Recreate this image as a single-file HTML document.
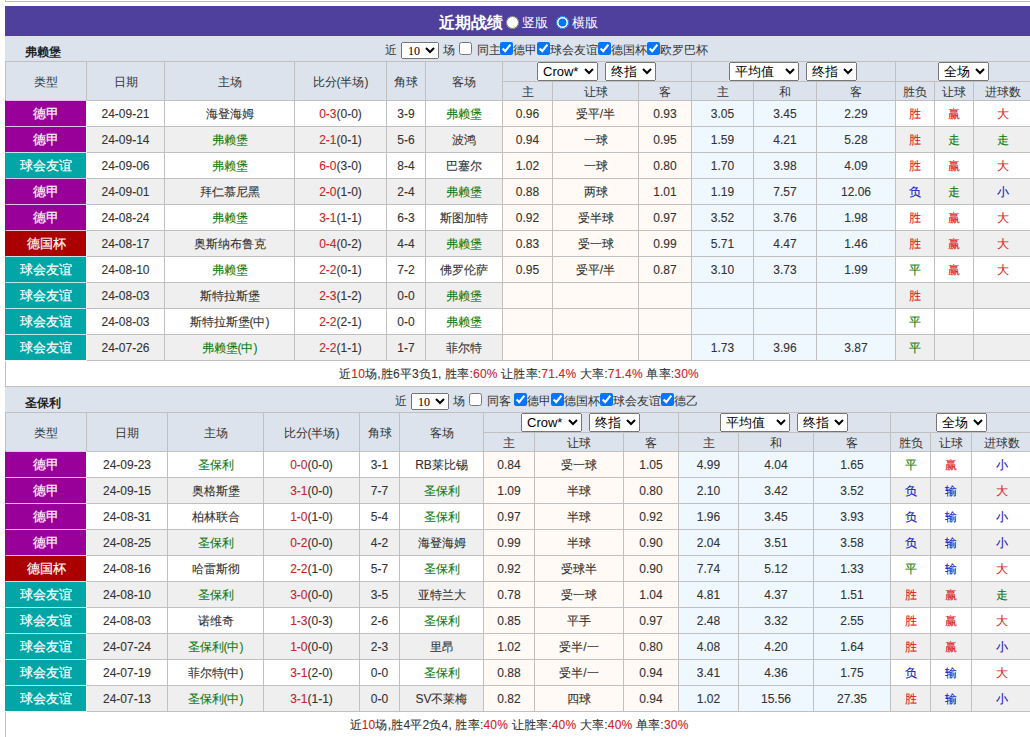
<!DOCTYPE html>
<html><head><meta charset="utf-8"><style>
*{box-sizing:border-box}
html,body{margin:0;padding:0;background:#fff;width:1030px;height:737px;overflow:hidden;position:relative;
 font-family:"Liberation Sans",sans-serif;font-size:12px;color:#333}
.ab{position:absolute;margin:0;white-space:nowrap;line-height:14px}
.topline{position:absolute;left:5px;top:-10px;width:1040px;height:12px;border:1px solid #bdbdbd}
.title{position:absolute;left:5px;top:6px;width:1040px;height:30px;background:#50409e}
.title b{position:absolute;left:434px;top:8px;font-size:16px;line-height:18px;font-weight:bold;color:#fff}
.title input{position:absolute;margin:0;width:13px;height:13px;top:10px}
.title span{position:absolute;top:9px;font-size:13px;line-height:16px;color:#fff}
.bar{position:absolute;left:5px;height:25px;background:#dce3ed}
.bar .tn{position:absolute;left:20px;top:9px;font-size:12px;line-height:14px;color:#222}
input[type=checkbox]{width:13px;height:13px}
select{font-family:"Liberation Sans",sans-serif;font-size:13px;color:#000;padding:0 0 0 1px}
select.sn{font-family:"Liberation Serif",serif;font-size:12px;padding-left:2px}
.t{position:absolute;left:5px;border-collapse:separate;border-spacing:0;table-layout:fixed;border-bottom:1px solid #c0c0c0}
.t td,.t th{line-height:14px;-webkit-text-stroke:0.1px currentColor;border-left:1px solid #c0c0c0;border-top:1px solid #c0c0c0;padding:0;text-align:center;font-weight:normal;white-space:nowrap;overflow:hidden}
.t th{background:#dce3ed;color:#333;-webkit-text-stroke:0;padding-top:2px}
.t tr.h1 th{height:20px}
.t tr.h2 th{height:19px}
.t tr.h1 th[rowspan]{height:39px}
.t td{height:26px;background:#fff;padding-top:1px}
.t tr.alt td{background:#efefef}
.t td.ty{color:#fff;border-top-color:rgba(255,255,255,.75);-webkit-text-stroke:0.2px #fff;font-size:12.5px}
.t tr td.od{background:#fffaf5}
.t tr td.av{background:#f0f8ff}
.t td.g{color:#0f7a0f}
.r{color:#cc2229}
.t tr.sum td{height:26px;background:#fff;letter-spacing:0.2px}
</style></head><body>
<div class="topline"></div>
<div class="title"><b>近期战绩</b><input type="radio" name="v" style="left:501px"><span style="left:517px">竖版</span><input type="radio" name="v" checked style="left:551px"><span style="left:567px">横版</span></div>
<div class="bar" style="top:36px;width:1027px"><b class="tn">弗赖堡</b></div>
<table class="t" style="top:61px;width:1027px"><colgroup><col style="width:81px"><col style="width:78px"><col style="width:130px"><col style="width:92px"><col style="width:39px"><col style="width:77px"><col style="width:50px"><col style="width:86px"><col style="width:53px"><col style="width:62px"><col style="width:63px"><col style="width:79px"><col style="width:39px"><col style="width:39px"><col style="width:59px"></colgroup>
<tr class="h1"><th rowspan="2">类型</th><th rowspan="2">日期</th><th rowspan="2">主场</th><th rowspan="2">比分(半场)</th><th rowspan="2">角球</th><th rowspan="2">客场</th><th colspan="3"></th><th colspan="3"></th><th colspan="3"></th></tr>
<tr class="h2"><th>主</th><th>让球</th><th>客</th><th>主</th><th>和</th><th>客</th><th>胜负</th><th>让球</th><th>进球数</th></tr>
<tr class=""><td class="ty" style="background:#990099;border-left-color:#990099">德甲</td><td style="border-left-color:#fff">24-09-21</td><td>海登海姆</td><td><span class="r">0-3</span>(0-0)</td><td>3-9</td><td class="g">弗赖堡</td><td class="od">0.96</td><td class="od">受平/半</td><td class="od">0.93</td><td class="av">3.05</td><td class="av">3.45</td><td class="av">2.29</td><td style="color:#dd2222">胜</td><td style="color:#dd2222">赢</td><td style="color:#dd2222">大</td></tr>
<tr class="alt"><td class="ty" style="background:#990099;border-left-color:#990099">德甲</td><td style="border-left-color:#fff">24-09-14</td><td class="g">弗赖堡</td><td><span class="r">2-1</span>(0-1)</td><td>5-6</td><td>波鸿</td><td class="od">0.94</td><td class="od">一球</td><td class="od">0.95</td><td class="av">1.59</td><td class="av">4.21</td><td class="av">5.28</td><td style="color:#dd2222">胜</td><td style="color:#0a780a">走</td><td style="color:#0a780a">走</td></tr>
<tr class=""><td class="ty" style="background:#00a5a5;border-left-color:#00a5a5">球会友谊</td><td style="border-left-color:#fff">24-09-06</td><td class="g">弗赖堡</td><td><span class="r">6-0</span>(3-0)</td><td>8-4</td><td>巴塞尔</td><td class="od">1.02</td><td class="od">一球</td><td class="od">0.80</td><td class="av">1.70</td><td class="av">3.98</td><td class="av">4.09</td><td style="color:#dd2222">胜</td><td style="color:#dd2222">赢</td><td style="color:#dd2222">大</td></tr>
<tr class="alt"><td class="ty" style="background:#990099;border-left-color:#990099">德甲</td><td style="border-left-color:#fff">24-09-01</td><td>拜仁慕尼黑</td><td><span class="r">2-0</span>(1-0)</td><td>2-4</td><td class="g">弗赖堡</td><td class="od">0.88</td><td class="od">两球</td><td class="od">1.01</td><td class="av">1.19</td><td class="av">7.57</td><td class="av">12.06</td><td style="color:#1010c0">负</td><td style="color:#0a780a">走</td><td style="color:#1010c0">小</td></tr>
<tr class=""><td class="ty" style="background:#990099;border-left-color:#990099">德甲</td><td style="border-left-color:#fff">24-08-24</td><td class="g">弗赖堡</td><td><span class="r">3-1</span>(1-1)</td><td>6-3</td><td>斯图加特</td><td class="od">0.92</td><td class="od">受半球</td><td class="od">0.97</td><td class="av">3.52</td><td class="av">3.76</td><td class="av">1.98</td><td style="color:#dd2222">胜</td><td style="color:#dd2222">赢</td><td style="color:#dd2222">大</td></tr>
<tr class="alt"><td class="ty" style="background:#aa0000;border-left-color:#aa0000">德国杯</td><td style="border-left-color:#fff">24-08-17</td><td>奥斯纳布鲁克</td><td><span class="r">0-4</span>(0-2)</td><td>4-4</td><td class="g">弗赖堡</td><td class="od">0.83</td><td class="od">受一球</td><td class="od">0.99</td><td class="av">5.71</td><td class="av">4.47</td><td class="av">1.46</td><td style="color:#dd2222">胜</td><td style="color:#dd2222">赢</td><td style="color:#dd2222">大</td></tr>
<tr class=""><td class="ty" style="background:#00a5a5;border-left-color:#00a5a5">球会友谊</td><td style="border-left-color:#fff">24-08-10</td><td class="g">弗赖堡</td><td><span class="r">2-2</span>(0-1)</td><td>7-2</td><td>佛罗伦萨</td><td class="od">0.95</td><td class="od">受平/半</td><td class="od">0.87</td><td class="av">3.10</td><td class="av">3.73</td><td class="av">1.99</td><td style="color:#0a780a">平</td><td style="color:#dd2222">赢</td><td style="color:#dd2222">大</td></tr>
<tr class="alt"><td class="ty" style="background:#00a5a5;border-left-color:#00a5a5">球会友谊</td><td style="border-left-color:#fff">24-08-03</td><td>斯特拉斯堡</td><td><span class="r">2-3</span>(1-2)</td><td>0-0</td><td class="g">弗赖堡</td><td class="od"></td><td class="od"></td><td class="od"></td><td class="av"></td><td class="av"></td><td class="av"></td><td style="color:#dd2222">胜</td><td></td><td></td></tr>
<tr class=""><td class="ty" style="background:#00a5a5;border-left-color:#00a5a5">球会友谊</td><td style="border-left-color:#fff">24-08-03</td><td>斯特拉斯堡(中)</td><td><span class="r">2-2</span>(2-1)</td><td>0-0</td><td class="g">弗赖堡</td><td class="od"></td><td class="od"></td><td class="od"></td><td class="av"></td><td class="av"></td><td class="av"></td><td style="color:#0a780a">平</td><td></td><td></td></tr>
<tr class="alt"><td class="ty" style="background:#00a5a5;border-left-color:#00a5a5">球会友谊</td><td style="border-left-color:#fff">24-07-26</td><td class="g">弗赖堡(中)</td><td><span class="r">2-2</span>(1-1)</td><td>1-7</td><td>菲尔特</td><td class="od"></td><td class="od"></td><td class="od"></td><td class="av">1.73</td><td class="av">3.96</td><td class="av">3.87</td><td style="color:#0a780a">平</td><td></td><td></td></tr>
<tr class="sum"><td colspan="15">近<span class="r">10</span>场,胜6平3负1, 胜率:<span class="r">60%</span> 让胜率:<span class="r">71.4%</span> 大率:<span class="r">71.4%</span> 单率:<span class="r">30%</span></td></tr>
</table>
<div class="bar" style="top:387px;width:1027px"><b class="tn">圣保利</b></div>
<table class="t" style="top:412px;width:1027px"><colgroup><col style="width:81px"><col style="width:81px"><col style="width:96px"><col style="width:96px"><col style="width:40px"><col style="width:84px"><col style="width:51px"><col style="width:89px"><col style="width:55px"><col style="width:60px"><col style="width:75px"><col style="width:77px"><col style="width:40px"><col style="width:41px"><col style="width:61px"></colgroup>
<tr class="h1"><th rowspan="2">类型</th><th rowspan="2">日期</th><th rowspan="2">主场</th><th rowspan="2">比分(半场)</th><th rowspan="2">角球</th><th rowspan="2">客场</th><th colspan="3"></th><th colspan="3"></th><th colspan="3"></th></tr>
<tr class="h2"><th>主</th><th>让球</th><th>客</th><th>主</th><th>和</th><th>客</th><th>胜负</th><th>让球</th><th>进球数</th></tr>
<tr class=""><td class="ty" style="background:#990099;border-left-color:#990099">德甲</td><td style="border-left-color:#fff">24-09-23</td><td class="g">圣保利</td><td><span class="r">0-0</span>(0-0)</td><td>3-1</td><td>RB莱比锡</td><td class="od">0.84</td><td class="od">受一球</td><td class="od">1.05</td><td class="av">4.99</td><td class="av">4.04</td><td class="av">1.65</td><td style="color:#0a780a">平</td><td style="color:#dd2222">赢</td><td style="color:#1010c0">小</td></tr>
<tr class="alt"><td class="ty" style="background:#990099;border-left-color:#990099">德甲</td><td style="border-left-color:#fff">24-09-15</td><td>奥格斯堡</td><td><span class="r">3-1</span>(0-0)</td><td>7-7</td><td class="g">圣保利</td><td class="od">1.09</td><td class="od">半球</td><td class="od">0.80</td><td class="av">2.10</td><td class="av">3.42</td><td class="av">3.52</td><td style="color:#1010c0">负</td><td style="color:#1010c0">输</td><td style="color:#dd2222">大</td></tr>
<tr class=""><td class="ty" style="background:#990099;border-left-color:#990099">德甲</td><td style="border-left-color:#fff">24-08-31</td><td>柏林联合</td><td><span class="r">1-0</span>(1-0)</td><td>5-4</td><td class="g">圣保利</td><td class="od">0.97</td><td class="od">半球</td><td class="od">0.92</td><td class="av">1.96</td><td class="av">3.45</td><td class="av">3.93</td><td style="color:#1010c0">负</td><td style="color:#1010c0">输</td><td style="color:#1010c0">小</td></tr>
<tr class="alt"><td class="ty" style="background:#990099;border-left-color:#990099">德甲</td><td style="border-left-color:#fff">24-08-25</td><td class="g">圣保利</td><td><span class="r">0-2</span>(0-0)</td><td>4-2</td><td>海登海姆</td><td class="od">0.99</td><td class="od">半球</td><td class="od">0.90</td><td class="av">2.04</td><td class="av">3.51</td><td class="av">3.58</td><td style="color:#1010c0">负</td><td style="color:#1010c0">输</td><td style="color:#1010c0">小</td></tr>
<tr class=""><td class="ty" style="background:#aa0000;border-left-color:#aa0000">德国杯</td><td style="border-left-color:#fff">24-08-16</td><td>哈雷斯彻</td><td><span class="r">2-2</span>(1-0)</td><td>5-7</td><td class="g">圣保利</td><td class="od">0.92</td><td class="od">受球半</td><td class="od">0.90</td><td class="av">7.74</td><td class="av">5.12</td><td class="av">1.33</td><td style="color:#0a780a">平</td><td style="color:#1010c0">输</td><td style="color:#dd2222">大</td></tr>
<tr class="alt"><td class="ty" style="background:#00a5a5;border-left-color:#00a5a5">球会友谊</td><td style="border-left-color:#fff">24-08-10</td><td class="g">圣保利</td><td><span class="r">3-0</span>(0-0)</td><td>3-5</td><td>亚特兰大</td><td class="od">0.78</td><td class="od">受一球</td><td class="od">1.04</td><td class="av">4.81</td><td class="av">4.37</td><td class="av">1.51</td><td style="color:#dd2222">胜</td><td style="color:#dd2222">赢</td><td style="color:#0a780a">走</td></tr>
<tr class=""><td class="ty" style="background:#00a5a5;border-left-color:#00a5a5">球会友谊</td><td style="border-left-color:#fff">24-08-03</td><td>诺维奇</td><td><span class="r">1-3</span>(0-3)</td><td>2-6</td><td class="g">圣保利</td><td class="od">0.85</td><td class="od">平手</td><td class="od">0.97</td><td class="av">2.48</td><td class="av">3.32</td><td class="av">2.55</td><td style="color:#dd2222">胜</td><td style="color:#dd2222">赢</td><td style="color:#dd2222">大</td></tr>
<tr class="alt"><td class="ty" style="background:#00a5a5;border-left-color:#00a5a5">球会友谊</td><td style="border-left-color:#fff">24-07-24</td><td class="g">圣保利(中)</td><td><span class="r">1-0</span>(0-0)</td><td>2-3</td><td>里昂</td><td class="od">1.02</td><td class="od">受半/一</td><td class="od">0.80</td><td class="av">4.08</td><td class="av">4.20</td><td class="av">1.64</td><td style="color:#dd2222">胜</td><td style="color:#dd2222">赢</td><td style="color:#1010c0">小</td></tr>
<tr class=""><td class="ty" style="background:#00a5a5;border-left-color:#00a5a5">球会友谊</td><td style="border-left-color:#fff">24-07-19</td><td>菲尔特(中)</td><td><span class="r">3-1</span>(2-0)</td><td>0-0</td><td class="g">圣保利</td><td class="od">0.88</td><td class="od">受半/一</td><td class="od">0.94</td><td class="av">3.41</td><td class="av">4.36</td><td class="av">1.75</td><td style="color:#1010c0">负</td><td style="color:#1010c0">输</td><td style="color:#dd2222">大</td></tr>
<tr class="alt"><td class="ty" style="background:#00a5a5;border-left-color:#00a5a5">球会友谊</td><td style="border-left-color:#fff">24-07-13</td><td class="g">圣保利(中)</td><td><span class="r">3-1</span>(1-1)</td><td>0-0</td><td>SV不莱梅</td><td class="od">0.82</td><td class="od">四球</td><td class="od">0.94</td><td class="av">1.02</td><td class="av">15.56</td><td class="av">27.35</td><td style="color:#dd2222">胜</td><td style="color:#1010c0">输</td><td style="color:#1010c0">小</td></tr>
<tr class="sum"><td colspan="15">近<span class="r">10</span>场,胜4平2负4, 胜率:<span class="r">40%</span> 让胜率:<span class="r">40%</span> 大率:<span class="r">40%</span> 单率:<span class="r">30%</span></td></tr>
</table>
<div class="ab" style="left:5px;top:360px;width:82px;height:1px;background:#f4f4f4"></div><div class="ab" style="left:5px;top:711px;width:82px;height:1px;background:#f4f4f4"></div><span class="ab" style="left:385px;top:43px;">近</span><select class="ab sn" style="left:401px;top:42px;width:38px;height:17px"><option>10</option></select><span class="ab" style="left:443px;top:43px;">场</span><input type="checkbox" class="ab" style="left:459px;top:42px"><span class="ab" style="left:477px;top:43px;">同主</span><input type="checkbox" class="ab" style="left:500px;top:42px" checked><span class="ab" style="left:513px;top:43px;">德甲</span><input type="checkbox" class="ab" style="left:537px;top:42px" checked><span class="ab" style="left:550px;top:43px;">球会友谊</span><input type="checkbox" class="ab" style="left:598px;top:42px" checked><span class="ab" style="left:611px;top:43px;">德国杯</span><input type="checkbox" class="ab" style="left:647px;top:42px" checked><span class="ab" style="left:660px;top:43px;">欧罗巴杯</span><span class="ab" style="left:395px;top:394px;">近</span><select class="ab sn" style="left:411px;top:393px;width:38px;height:17px"><option>10</option></select><span class="ab" style="left:453px;top:394px;">场</span><input type="checkbox" class="ab" style="left:469px;top:393px"><span class="ab" style="left:487px;top:394px;">同客</span><input type="checkbox" class="ab" style="left:514px;top:393px" checked><span class="ab" style="left:527px;top:394px;">德甲</span><input type="checkbox" class="ab" style="left:551px;top:393px" checked><span class="ab" style="left:564px;top:394px;">德国杯</span><input type="checkbox" class="ab" style="left:600px;top:393px" checked><span class="ab" style="left:613px;top:394px;">球会友谊</span><input type="checkbox" class="ab" style="left:661px;top:393px" checked><span class="ab" style="left:674px;top:394px;">德乙</span><select class="ab sl" style="left:537px;top:62px;width:61px;height:19px"><option>Crow*</option></select><select class="ab sl" style="left:605px;top:62px;width:51px;height:19px"><option>终指</option></select><select class="ab sl" style="left:729px;top:62px;width:70px;height:19px"><option>平均值</option></select><select class="ab sl" style="left:806px;top:62px;width:51px;height:19px"><option>终指</option></select><select class="ab sl" style="left:938px;top:62px;width:51px;height:19px"><option>全场</option></select><select class="ab sl" style="left:521px;top:413px;width:61px;height:19px"><option>Crow*</option></select><select class="ab sl" style="left:589px;top:413px;width:51px;height:19px"><option>终指</option></select><select class="ab sl" style="left:720px;top:413px;width:70px;height:19px"><option>平均值</option></select><select class="ab sl" style="left:797px;top:413px;width:51px;height:19px"><option>终指</option></select><select class="ab sl" style="left:936px;top:413px;width:51px;height:19px"><option>全场</option></select>
</body></html>
